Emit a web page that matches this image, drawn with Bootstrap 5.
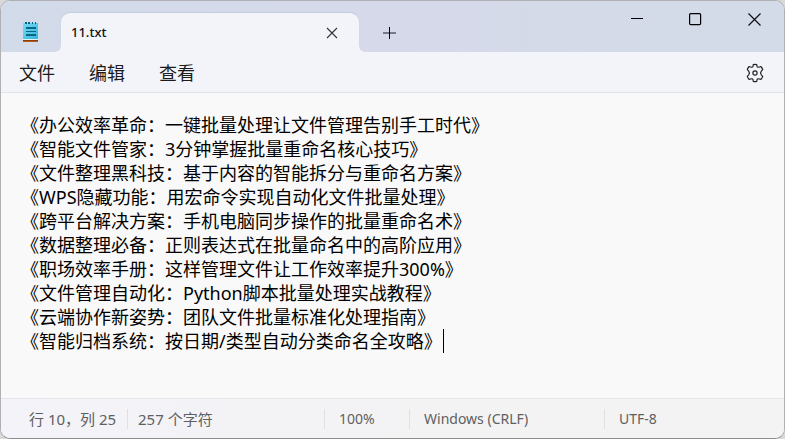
<!DOCTYPE html>
<html lang="zh-CN">
<head>
<meta charset="utf-8">
<meta name="viewport" content="width=device-width, initial-scale=1">
<title>11.txt</title>
<link href="https://cdn.jsdelivr.net/npm/bootstrap@5.3.0/dist/css/bootstrap.min.css" rel="stylesheet">
<style>
  body { background: #d9d9d9; font-family: "Noto Sans", "Noto Sans CJK SC", sans-serif; color: #1b1b1b; }
  .app-window { border: 1px solid #b0b0b2; border-bottom-color: #8c8c8c; border-radius: 10px; background: #f9f9f9; }
  .title-bar { height: 51px; background: linear-gradient(90deg, #d2dbe9, #d6d9ea 50%, #d4dae8 75%, #d3dbe8); }
  .app-icon { width: 60px; padding: 20px 0 0 21px; }
  .doc-tab { width: 298px; height: 39px; margin-top: 12px; padding: 0 16px 0 10px; background: #f3f4f9; border-radius: 9px 9px 0 0; box-shadow: 0 -1px 1px #c3cbdc; }
  .doc-tab::before, .doc-tab::after { content: ""; position: absolute; bottom: 0; width: 5px; height: 5px; }
  .doc-tab::before { left: -5px; background: radial-gradient(circle at 0 0, transparent 4px, #f3f4f9 5px); }
  .doc-tab::after { right: -5px; background: radial-gradient(circle at 100% 0, transparent 4px, #f3f4f9 5px); }
  .tab-name { font-size: 13px; font-weight: 500; color: #111; }
  .plain-btn { border: 0; background: transparent; padding: 0; color: #111; display: flex; align-items: center; justify-content: center; }
  .tab-close { width: 22px; height: 22px; }
  .new-tab { width: 38px; height: 39px; margin: 12px 0 0 11px; }
  .win-btn { width: 59px; height: 36px; }
  .menu-strip { height: 41px; background: linear-gradient(90deg, #f3f4fa, #f2f4f9); border-bottom: 1px solid #e3e4e8; padding: 1px 19px 0 18px; }
  .menu-item { font-size: 18px; line-height: 24px; margin-right: 34px; color: #1b1b1b; }
  .text-area { resize: none; border: 0; outline: 0; background: #f9f9f9; color: #000; font-size: 18px; line-height: 24px; padding: 20px 20px 0; overflow: hidden; white-space: pre; }
  .caret-bar { left: 442px; top: 236px; width: 1px; height: 24px; background: #000; }
  .status-strip { height: 40px; border-top: 1px solid #e5e5e7; background: linear-gradient(90deg, #f3f3f9, #f3f3f3 70%); font-size: 14px; line-height: 20px; color: #5f5f61; }
  .status-cell { padding-left: 14px; border-left: 1px solid #e0e0e3; white-space: pre; }
  .cell-pos { width: 126px; padding-left: 28px; font-size: 15px; white-space: pre; }
  .cell-zoom { width: 85px; }
  .cell-eol { width: 195px; }
  .cell-enc { width: 180px; }
  .cell-count { padding-left: 10px; font-size: 15px; }
</style>
<script src="https://cdn.jsdelivr.net/npm/bootstrap@5.3.0/dist/js/bootstrap.bundle.min.js"></script>
</head>
<body>
<div class="app-window vh-100 d-flex flex-column overflow-hidden">
  <header class="title-bar d-flex align-items-start flex-shrink-0">
    <div class="app-icon flex-shrink-0">
      <svg class="d-block" width="18" height="22" viewBox="0 0 18 22" aria-hidden="true">
        <defs><linearGradient id="pad" x1="0" y1="0" x2="1" y2="1"><stop offset="0" stop-color="#7adcf2"/><stop offset="1" stop-color="#32b4dc"/></linearGradient></defs>
        <path fill="#b95a16" d="M1 19h15v2H1z"/><path fill="#86400f" d="M1 19h15v1H1z"/>
        <path fill="#dff3fa" d="M1 17h15v2H1z"/>
        <path fill="url(#pad)" d="M1 2h15v16H1z"/>
        <path fill="#0a6688" d="M3 1h2v2H3zM6 1h2v2H6zM10 1h1v2h-1zM13 1h1v2h-1zM4 6h10v2H4zM4 10h10v1H4zM4 13h10v2H4z"/>
      </svg>
    </div>
    <div class="doc-tab position-relative d-flex align-items-center justify-content-between">
      <span class="tab-name">11.txt</span>
      <button type="button" class="plain-btn tab-close" aria-label="关闭标签页">
        <svg width="12" height="12" viewBox="0 0 12 12" fill="none" stroke="#333" stroke-width="1.1"><path d="M1 1l10 10M11 1L1 11"/></svg>
      </button>
    </div>
    <button type="button" class="plain-btn new-tab" aria-label="新建标签页">
      <svg width="13" height="13" viewBox="0 0 13 13"><path fill="#77788a" d="M0 6h13v2H0z"/><path fill="#000" d="M6 1h1v12H6z"/></svg>
    </button>
    <div class="d-flex ms-auto">
      <button type="button" class="plain-btn win-btn" aria-label="最小化">
        <svg width="13" height="13" viewBox="0 0 13 13"><path d="M1 5h12v1H1z"/></svg>
      </button>
      <button type="button" class="plain-btn win-btn" aria-label="最大化">
        <svg width="13" height="13" viewBox="0 0 13 13" fill="none" stroke="#000" stroke-width="1.2"><rect x=".6" y=".6" width="11" height="11" rx="1"/></svg>
      </button>
      <button type="button" class="plain-btn win-btn" aria-label="关闭">
        <svg width="13" height="13" viewBox="0 0 13 13" fill="none" stroke="#111" stroke-width="1.2"><path d="M.5.5l12 12M12.500.5l-12 12"/></svg>
      </button>
    </div>
  </header>
  <nav class="menu-strip d-flex align-items-center flex-shrink-0">
    <button type="button" class="plain-btn menu-item">文件</button>
    <button type="button" class="plain-btn menu-item">编辑</button>
    <button type="button" class="plain-btn menu-item">查看</button>
    <button type="button" class="plain-btn ms-auto" aria-label="设置">
      <svg width="20" height="20" viewBox="0 0 20 20" fill="none" stroke="#222" stroke-width="1.2" stroke-linejoin="round"><path d="M8.300 1.600Q10 1.200 11.700 1.600L12 3.200Q12.400 4.500 13.700 4.200L15.800 3.500Q17.200 4.900 17.700 6.700L16.300 8.200Q14.900 10 16.300 11.800L17.700 13.300Q17.200 15.100 15.800 16.500L13.700 15.800Q12.400 15.500 12 16.800L11.700 18.400Q10 18.800 8.300 18.400L8 16.800Q7.600 15.500 6.300 15.800L4.200 16.500Q2.800 15.100 2.300 13.300L3.700 11.800Q5.100 10 3.700 8.200L2.300 6.700Q2.800 4.900 4.200 3.500L6.300 4.200Q7.600 4.500 8 3.200Z"/><circle cx="10" cy="10" r="2.1"/></svg>
    </button>
  </nav>
  <main class="position-relative flex-grow-1 d-flex">
    <textarea class="text-area w-100" aria-label="文本编辑器" spellcheck="false">《办公效率革命：一键批量处理让文件管理告别手工时代》
《智能文件管家：3分钟掌握批量重命名核心技巧》
《文件整理黑科技：基于内容的智能拆分与重命名方案》
《WPS隐藏功能：用宏命令实现自动化文件批量处理》
《跨平台解决方案：手机电脑同步操作的批量重命名术》
《数据整理必备：正则表达式在批量命名中的高阶应用》
《职场效率手册：这样管理文件让工作效率提升300%》
《文件管理自动化：Python脚本批量处理实战教程》
《云端协作新姿势：团队文件批量标准化处理指南》
《智能归档系统：按日期/类型自动分类命名全攻略》</textarea>
    <span class="caret-bar position-absolute"></span>
  </main>
  <footer class="status-strip d-flex align-items-center flex-shrink-0">
    <div class="cell-pos">行 10，列 25</div>
    <div class="status-cell cell-count flex-grow-1">257 个字符</div>
    <div class="status-cell cell-zoom">100%</div>
    <div class="status-cell cell-eol">Windows (CRLF)</div>
    <div class="status-cell cell-enc">UTF-8</div>
  </footer>
</div>
</body>
</html>
